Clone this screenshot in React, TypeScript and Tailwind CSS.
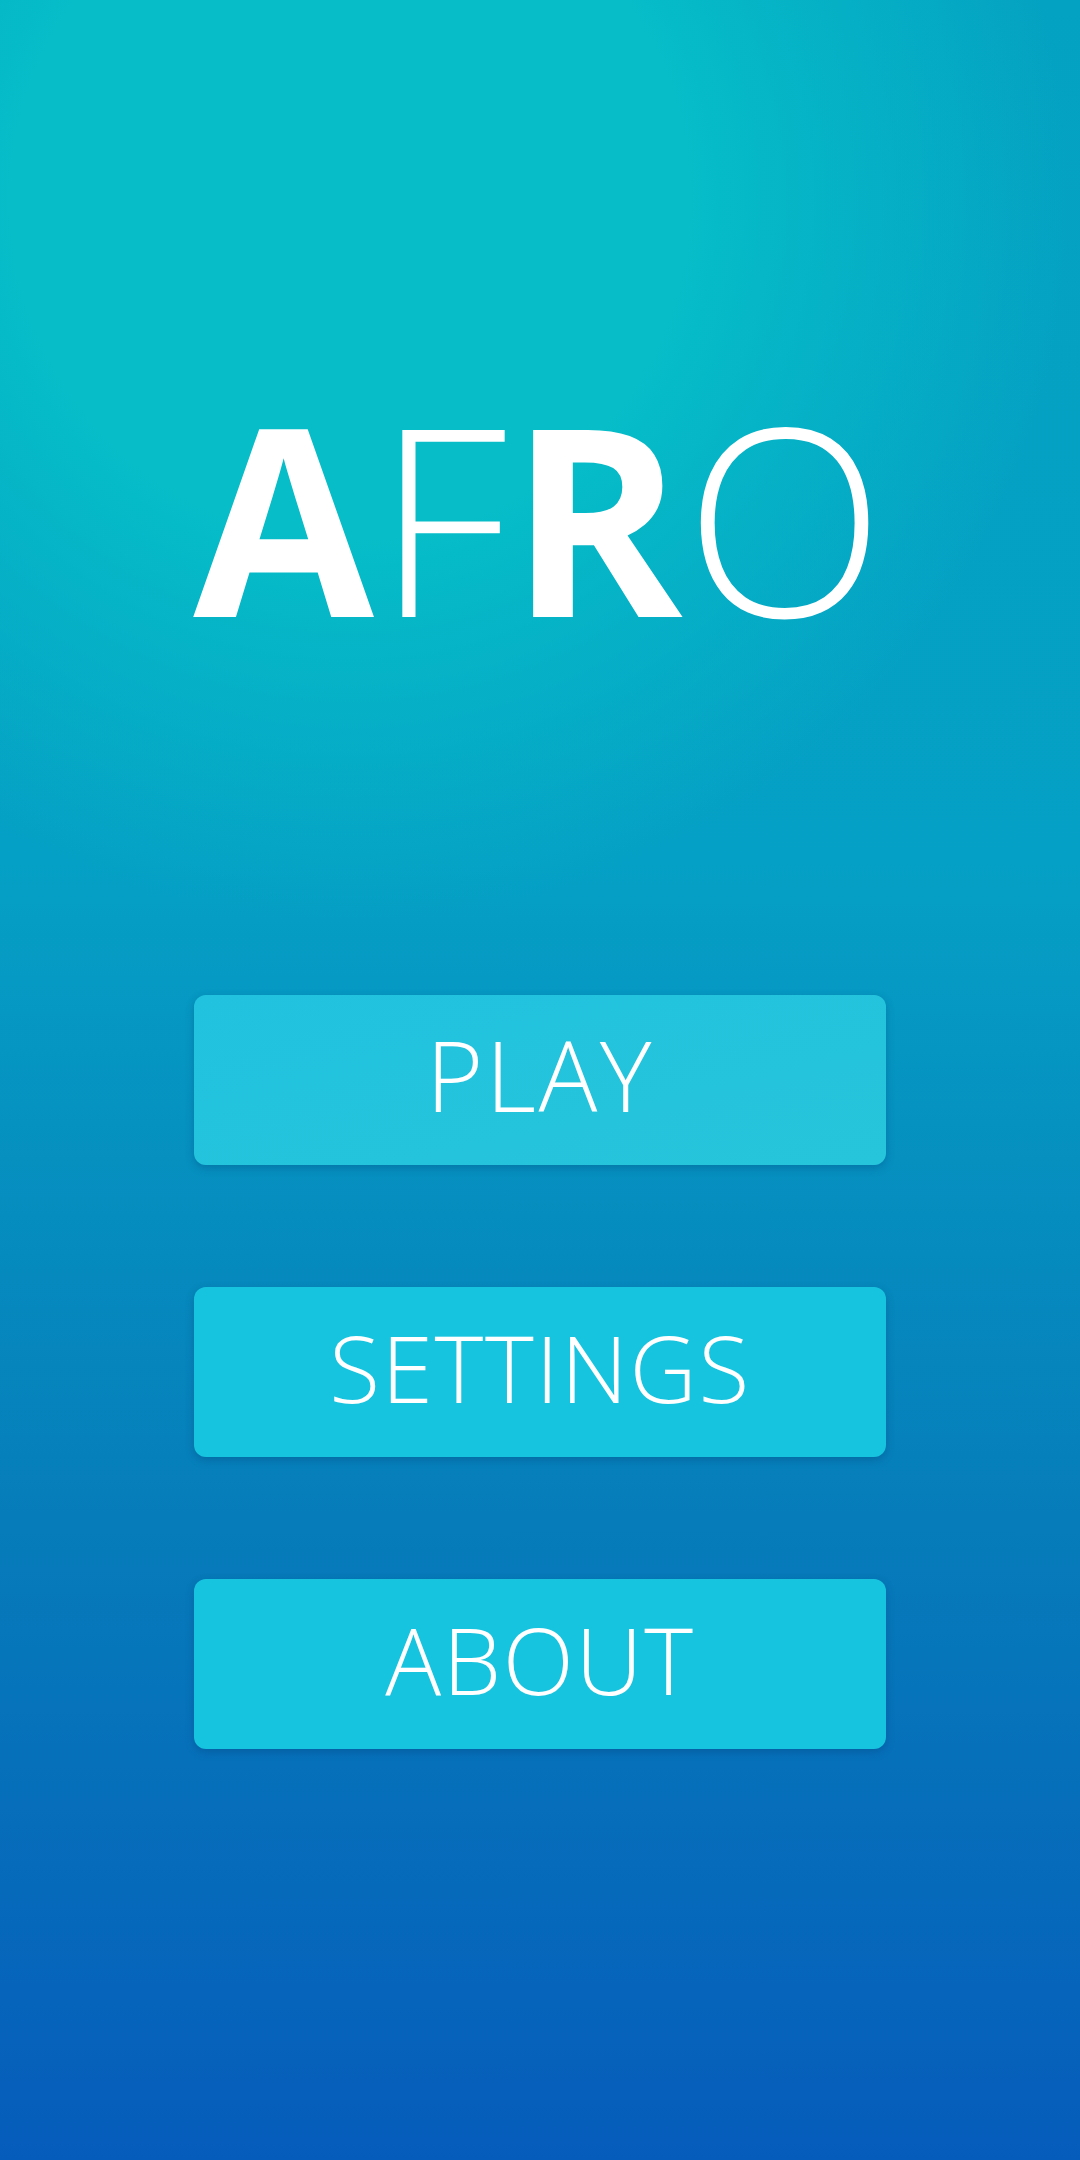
import React from "react";

const items = [
  { label: "PLAY", active: true },
  { label: "SETTINGS", active: false },
  { label: "ABOUT", active: false },
];

function MenuButton({ label, active }: { label: string; active: boolean }) {
  return (
    <button
      className={
        active
          ? "flex h-[170px] w-[692px] items-center justify-center rounded-[12px] bg-gradient-to-br from-[#20c2df] to-[#27c5db] pb-[12px] text-[98px] font-light leading-none tracking-[2.5px] text-white shadow-[0_3px_8px_rgba(0,40,90,0.25)]"
          : "flex h-[170px] w-[692px] items-center justify-center rounded-[12px] bg-[#17c4df] pb-[9px] text-[93px] font-light leading-none tracking-[1.7px] text-white shadow-[0_3px_8px_rgba(0,40,90,0.25)]"
      }
    >
      {label}
    </button>
  );
}

export default function App() {
  return (
    <div className="flex min-h-[2160px] w-full flex-col items-center bg-[radial-gradient(circle_at_350px_200px,#06bdc8_0px,#06bdc8_340px,rgba(5,162,196,0)_720px),linear-gradient(180deg,#04a2c2_0%,#05a0c5_40%,#067dba_70%,#065cbb_100%)] font-['Open_Sans',sans-serif]">
      <h1 className="mt-[385px] flex text-[262px] leading-none tracking-[2px] text-white">
        <span className="font-bold">A</span>
        <span className="font-light">F</span>
        <span className="font-bold">R</span>
        <span className="font-light">O</span>
      </h1>
      <div className="mt-[348px] flex flex-col gap-[122px]">
        {items.map((item) => (
          <MenuButton key={item.label} label={item.label} active={item.active} />
        ))}
      </div>
    </div>
  );
}
